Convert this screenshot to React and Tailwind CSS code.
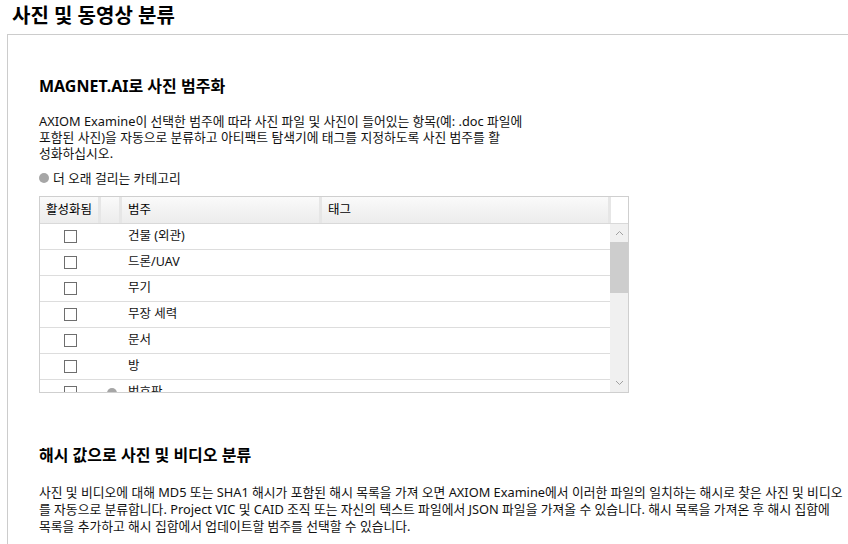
import React from 'react';

const categories = [
  { name: '건물 (외관)' },
  { name: '드론/UAV' },
  { name: '무기' },
  { name: '무장 세력' },
  { name: '문서' },
  { name: '방' },
  { name: '번호판', slow: true },
];

const font = { fontFamily: '"Segoe UI", "Noto Sans", "Noto Sans CJK KR", sans-serif' };

const HeaderCell = ({ className = '', children }) => (
  <div className={`h-full flex items-center px-[6px] border-r-[3px] border-r-[#e6e6e6] bg-gradient-to-b from-[#fafafa] to-[#ececec] text-[12.5px] text-black ${className}`}>
    {children}
  </div>
);

const App = () => {
  return (
    <div className="w-[848px] h-[544px] overflow-hidden bg-white text-[#111]" style={font}>
      <h1 className="pl-[12px] pt-[3px] h-[34px] text-[20px] font-bold leading-[26px] text-black">
        사진 및 동영상 분류
      </h1>
      <div className="ml-[7px] border-l border-t border-[#cccccc] h-[510px] pl-[31px]">
        <h2 className="pt-[40px] text-[16px] font-bold leading-[22px] text-black">MAGNET.AI로 사진 범주화</h2>
        <p className="mt-[16px] w-[500px] whitespace-nowrap text-[12.8px] leading-[16px]">
          AXIOM Examine이 선택한 범주에 따라 사진 파일 및 사진이 들어있는 항목(예: .doc 파일에
          <br />
          포함된 사진)을 자동으로 분류하고 아티팩트 탐색기에 태그를 지정하도록 사진 범주를 활
          <br />
          성화하십시오.
        </p>
        <div className="mt-[9px] flex items-center gap-[4px] text-[12.8px] leading-[16px]">
          <span className="inline-block w-[10px] h-[10px] rounded-full bg-[#a6a6a6]" />
          <span>더 오래 걸리는 카테고리</span>
        </div>

        <div className="mt-[10px] w-[590px] h-[197px] border border-[#cfcfcf] flex flex-col">
          <div className="flex h-[27px] border-b border-[#d9d9d9] shrink-0">
            <HeaderCell className="w-[61px]">활성화됨</HeaderCell>
            <HeaderCell className="w-[21px]" />
            <HeaderCell className="w-[200px]">범주</HeaderCell>
            <HeaderCell className="w-[289px]">태그</HeaderCell>
            <div className="flex-1 bg-white" />
          </div>
          <div className="flex flex-1 overflow-hidden">
            <div className="w-[571px] overflow-hidden">
              {categories.map((c) => (
                <div key={c.name} className="flex h-[26px] items-center border-b border-[#dddddd] text-[12.5px]">
                  <div className="w-[61px] flex justify-center">
                    <span className="block w-[13px] h-[13px] border border-[#6e6e6e] bg-white" />
                  </div>
                  <div className="w-[21px] flex justify-center">
                    {c.slow && <span className="block w-[10px] h-[10px] rounded-full bg-[#a6a6a6]" />}
                  </div>
                  <div className="w-[200px] px-[6px]">{c.name}</div>
                  <div className="flex-1" />
                </div>
              ))}
            </div>
            <div className="w-[18px] bg-[#f0f0f0] flex flex-col">
              <div className="h-[18px] flex items-center justify-center">
                <svg width="9" height="6" viewBox="0 0 9 6"><path d="M1 5 L4.5 1.5 L8 5" fill="none" stroke="#a0a0a0" strokeWidth="1" /></svg>
              </div>
              <div className="h-[51px] bg-[#cdcdcd]" />
              <div className="flex-1" />
              <div className="h-[18px] flex items-center justify-center">
                <svg width="9" height="6" viewBox="0 0 9 6"><path d="M1 1 L4.5 4.5 L8 1" fill="none" stroke="#a0a0a0" strokeWidth="1" /></svg>
              </div>
            </div>
          </div>
        </div>

        <h2 className="mt-[51px] text-[16px] font-bold leading-[22px] text-black">해시 값으로 사진 및 비디오 분류</h2>
        <p className="mt-[18px] w-[805px] whitespace-nowrap text-[12.8px] leading-[17px]">
          사진 및 비디오에 대해 MD5 또는 SHA1 해시가 포함된 해시 목록을 가져 오면 AXIOM Examine에서 이러한 파일의 일치하는 해시로 찾은 사진 및 비디오
          <br />
          를 자동으로 분류합니다. Project VIC 및 CAID 조직 또는 자신의 텍스트 파일에서 JSON 파일을 가져올 수 있습니다. 해시 목록을 가져온 후 해시 집합에
          <br />
          목록을 추가하고 해시 집합에서 업데이트할 범주를 선택할 수 있습니다.
        </p>
      </div>
    </div>
  );
};

export default App;
